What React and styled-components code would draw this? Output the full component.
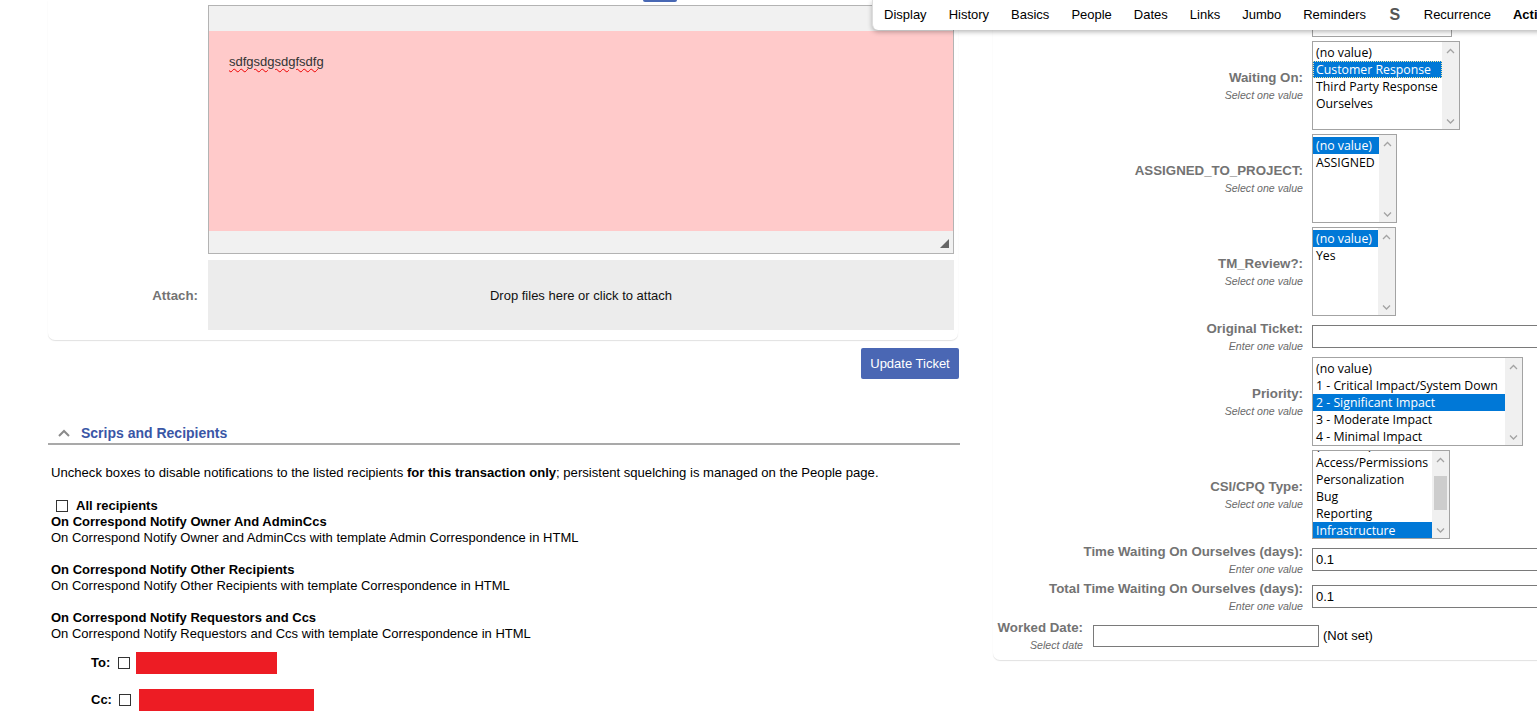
import React from 'react';
import styled, { createGlobalStyle } from 'styled-components';

const GlobalStyle = createGlobalStyle`
  html, body {
    margin: 0;
    padding: 0;
    background: #fff;
    overflow: hidden;
  }
  body {
    font-family: "Liberation Sans", Arial, sans-serif;
    font-size: 13px;
    color: #000;
  }
`;

const Page = styled.div`
  position: relative;
  display: flex;
  align-items: flex-start;
  gap: 33px;
  padding-left: 48px;
  width: max-content;
`;

/* ---------- top tab menu (floats over the page) ---------- */

const TabMenu = styled.nav`
  position: absolute;
  top: 0;
  left: 872px;
  width: 720px;
  height: 30px;
  display: flex;
  align-items: center;
  background: #fff;
  border-left: 1px solid #ddd;
  border-radius: 0 0 0 6px;
  box-shadow: 0 2px 5px rgba(0, 0, 0, 0.28);
  z-index: 5;
`;

const TabItem = styled.span`
  padding: 0 ${(p) => (p.$icon ? 12.5 : 11)}px;
  font-size: ${(p) => (p.$icon ? '16px' : '13px')};
  font-weight: ${(p) => (p.$bold || p.$icon ? 700 : 400)};
  color: ${(p) => (p.$icon ? '#555' : '#000')};
  line-height: 28px;
  white-space: nowrap;
`;

/* ---------- left column ---------- */

const LeftCol = styled.div`
  width: 912px;
  display: flex;
  flex-direction: column;
`;

const EditCard = styled.div`
  width: 910px;
  display: grid;
  grid-template-columns: 150px 746px;
  column-gap: 10px;
  row-gap: 6px;
  padding-bottom: 10px;
  border-radius: 0 0 7px 7px;
  box-shadow: 0 1px 1px #e2e2e2;
`;

const FieldLabel = styled.div`
  align-self: center;
  text-align: right;
  font-weight: 700;
  font-size: 13.3px;
  color: #737373;
`;

const EditorCell = styled.div`
  display: flex;
  flex-direction: column;
`;

const TopTab = styled.div`
  width: 34px;
  height: 2px;
  margin-left: 435px;
  margin-bottom: 3px;
  background: #4868b4;
  border-radius: 0 0 2px 2px;
`;

const Editor = styled.div`
  border: 1px solid #b3b3b3;
  display: flex;
  flex-direction: column;
`;

const EditorBar = styled.div`
  height: ${(p) => p.$h}px;
  background: #f1f1f1;
  display: flex;
  justify-content: flex-end;
  align-items: flex-end;
  padding: 0 4px 5px 0;
  box-sizing: border-box;
`;

const EditorBody = styled.div`
  height: 200px;
  background: #ffcaca;
  padding: 23px 20px 0;
  box-sizing: border-box;
  font-size: 13px;
  line-height: 16px;
  color: #333;
`;

const Misspelled = styled.span`
  text-decoration: underline wavy #e00;
  text-decoration-thickness: 1px;
  text-underline-offset: 2px;
`;

const DropZone = styled.div`
  height: 70px;
  background: #ececec;
  display: flex;
  align-items: center;
  justify-content: center;
  font-size: 13px;
  color: #111;
`;

const ButtonRow = styled.div`
  display: flex;
  justify-content: flex-end;
  margin-top: 8px;
  padding-right: 1px;
`;

const UpdateButton = styled.button`
  width: 98px;
  height: 31px;
  border: none;
  border-radius: 2px;
  background: #4a67b4;
  color: #fff;
  font-family: "Liberation Sans", Arial, sans-serif;
  font-size: 13px;
  padding: 0;
  cursor: pointer;
`;

const SectionHead = styled.div`
  margin-top: 44px;
  height: 20px;
  display: flex;
  align-items: center;
  gap: 11px;
  padding-left: 10px;
  border-bottom: 2px solid #a9a9a9;
`;

const SectionTitle = styled.span`
  font-size: 14px;
  font-weight: 700;
  color: #3a56a6;
`;

const Notice = styled.p`
  margin: 20px 0 0;
  padding-left: 3px;
  font-size: 13.1px;
  line-height: 16px;
`;

const Scrips = styled.div`
  margin-top: 17px;
  padding-left: 3px;
  font-size: 13px;
  line-height: 16px;
`;

const AllRow = styled.label`
  display: flex;
  align-items: center;
  gap: 8px;
  padding-left: 5px;
  font-weight: 700;
`;

const Check = styled.input.attrs({ type: 'checkbox' })`
  appearance: none;
  width: 12px;
  height: 12px;
  margin: 0;
  border: 1px solid #333;
  background: #fff;
  box-sizing: border-box;
  flex-shrink: 0;
`;

const ScripBlock = styled.div`
  & + & {
    margin-top: 16px;
  }
`;

const ScripTitle = styled.div`
  font-weight: 700;
`;

const RecipientRow = styled.div`
  display: flex;
  align-items: center;
  gap: 6px;
  margin-top: ${(p) => p.$top}px;
  padding-left: 40px;
`;

const RecipientLabel = styled.span`
  font-weight: 700;
  width: 21px;
  margin-right: ${(p) => p.$mr}px;
`;

const Redacted = styled.span`
  display: block;
  width: ${(p) => p.$w}px;
  height: 22px;
  margin-left: ${(p) => p.$ml || 0}px;
  background: #ed1c24;
`;

/* ---------- right column ---------- */

const RightCard = styled.div`
  width: 620px;
  padding-bottom: 8px;
  border-radius: 0 0 0 7px;
  box-shadow: 0 1px 1px #e2e2e2;
`;

const FieldGrid = styled.div`
  display: grid;
  grid-template-columns: ${(p) => p.$label}px 1fr;
  column-gap: ${(p) => p.$gap}px;
  row-gap: 4px;
  align-items: center;
  margin-top: ${(p) => p.$top || 0}px;
`;

const LabelCell = styled.div`
  text-align: right;
  padding: 1px 0;
`;

const LabelText = styled.div`
  font-weight: 700;
  font-size: 13.3px;
  line-height: 16px;
  color: #737373;
  white-space: nowrap;
`;

const Hint = styled.div`
  font-style: italic;
  font-size: 10.6px;
  line-height: 12px;
  margin-top: 3px;
  color: #6a6a6a;
`;

const ValueCell = styled.div`
  display: flex;
  align-items: center;
  gap: 4px;
`;

const StubBox = styled.div`
  width: 140px;
  height: 37px;
  border: 1px solid #a3a3a3;
  border-top: none;
  box-sizing: border-box;
`;

const ListBox = styled.div`
  width: ${(p) => p.$w}px;
  height: 89px;
  border: 1px solid #a3a3a3;
  box-sizing: border-box;
  display: flex;
  background: #fff;
  overflow: hidden;
`;

const Options = styled.div`
  flex: 1;
  overflow: hidden;
  padding-top: 2px;
`;

const OptionList = styled.div`
  margin-top: ${(p) => -(p.$scroll || 0)}px;
`;

const Option = styled.div`
  height: 17px;
  line-height: 17px;
  padding-left: 3px;
  font-family: "Open Sans", "Liberation Sans", sans-serif;
  font-size: 12.3px;
  white-space: nowrap;
  box-sizing: border-box;
  background: ${(p) => (p.$selected ? '#0078d7' : 'transparent')};
  color: ${(p) => (p.$selected ? '#fff' : '#000')};
  outline: ${(p) => (p.$focus ? '1px dotted #f3e9a4' : 'none')};
  outline-offset: -1px;
`;

const ScrollBar = styled.div`
  width: 17px;
  background: #f0f0f0;
  display: flex;
  flex-direction: column;
  flex-shrink: 0;
`;

const ScrollArrow = styled.div`
  height: 17px;
  display: flex;
  align-items: center;
  justify-content: center;
`;

const ScrollTrack = styled.div`
  flex: 1;
  padding: 0 2px;
`;

const ScrollThumb = styled.div`
  margin-top: ${(p) => p.$top}px;
  height: ${(p) => p.$h}px;
  background: #cdcdcd;
`;

const TextInput = styled.input`
  width: ${(p) => p.$w}px;
  height: ${(p) => p.$h || 23}px;
  border: 1px solid #7a7a7a;
  box-sizing: border-box;
  padding: 0 3px;
  margin: 0;
  font-family: "Liberation Sans", Arial, sans-serif;
  font-size: 13px;
  color: #000;
  flex-shrink: 0;
`;

const Arrow = ({ down }) => (
  <svg width="9" height="6" viewBox="0 0 9 6">
    <polyline
      points={down ? '1,1.5 4.5,5 8,1.5' : '1,5 4.5,1.5 8,5'}
      fill="none"
      stroke="#a3a3a3"
      strokeWidth="1.3"
    />
  </svg>
);

const SelectList = ({ width, options, selected, focus, scroll, thumb }) => (
  <ListBox $w={width}>
    <Options>
      <OptionList $scroll={scroll}>
        {options.map((o, i) => (
          <Option key={o} $selected={i === selected} $focus={focus && i === selected}>
            {o}
          </Option>
        ))}
      </OptionList>
    </Options>
    <ScrollBar>
      <ScrollArrow>
        <Arrow />
      </ScrollArrow>
      <ScrollTrack>{thumb && <ScrollThumb $top={thumb.top} $h={thumb.h} />}</ScrollTrack>
      <ScrollArrow>
        <Arrow down />
      </ScrollArrow>
    </ScrollBar>
  </ListBox>
);

const Label = ({ text, hint }) => (
  <LabelCell>
    <LabelText>{text}</LabelText>
    <Hint>{hint}</Hint>
  </LabelCell>
);

const tabs = ['Display', 'History', 'Basics', 'People', 'Dates', 'Links', 'Jumbo', 'Reminders'];

const fields = [
  {
    label: 'Waiting On:',
    list: {
      width: 148,
      options: ['(no value)', 'Customer Response', 'Third Party Response', 'Ourselves'],
      selected: 1,
      focus: true,
    },
  },
  { label: 'ASSIGNED_TO_PROJECT:', list: { width: 85, options: ['(no value)', 'ASSIGNED'], selected: 0 } },
  { label: 'TM_Review?:', list: { width: 84, options: ['(no value)', 'Yes'], selected: 0 } },
  { label: 'Original Ticket:', input: '' },
  {
    label: 'Priority:',
    list: {
      width: 211,
      options: [
        '(no value)',
        '1 - Critical Impact/System Down',
        '2 - Significant Impact',
        '3 - Moderate Impact',
        '4 - Minimal Impact',
      ],
      selected: 2,
    },
  },
  {
    label: 'CSI/CPQ Type:',
    list: {
      width: 138,
      options: ['(no value)', 'Access/Permissions', 'Personalization', 'Bug', 'Reporting', 'Infrastructure'],
      selected: 5,
      scroll: 16,
      thumb: { top: 8, h: 34 },
    },
  },
  { label: 'Time Waiting On Ourselves (days):', input: '0.1' },
  { label: 'Total Time Waiting On Ourselves (days):', input: '0.1' },
];

const scrips = [
  {
    title: 'On Correspond Notify Owner And AdminCcs',
    desc: 'On Correspond Notify Owner and AdminCcs with template Admin Correspondence in HTML',
  },
  {
    title: 'On Correspond Notify Other Recipients',
    desc: 'On Correspond Notify Other Recipients with template Correspondence in HTML',
  },
  {
    title: 'On Correspond Notify Requestors and Ccs',
    desc: 'On Correspond Notify Requestors and Ccs with template Correspondence in HTML',
  },
];

export default function App() {
  return (
    <>
      <GlobalStyle />
      <Page>
        <TabMenu>
          {tabs.map((t) => (
            <TabItem key={t}>{t}</TabItem>
          ))}
          <TabItem $icon>S</TabItem>
          <TabItem>Recurrence</TabItem>
          <TabItem $bold>Actions</TabItem>
        </TabMenu>

        <LeftCol>
          <EditCard>
            <div />
            <EditorCell>
              <TopTab />
              <Editor>
                <EditorBar $h={25} />
                <EditorBody>
                  <Misspelled>sdfgsdgsdgfsdfg</Misspelled>
                </EditorBody>
                <EditorBar $h={22}>
                  <svg width="9" height="9" viewBox="0 0 9 9">
                    <polygon points="9,0 9,9 0,9" fill="#666" />
                  </svg>
                </EditorBar>
              </Editor>
            </EditorCell>
            <FieldLabel>Attach:</FieldLabel>
            <DropZone>Drop files here or click to attach</DropZone>
          </EditCard>

          <ButtonRow>
            <UpdateButton>Update Ticket</UpdateButton>
          </ButtonRow>

          <SectionHead>
            <svg width="12" height="8" viewBox="0 0 12 8">
              <polyline points="1,7 6,2 11,7" fill="none" stroke="#8a8a8a" strokeWidth="2" />
            </svg>
            <SectionTitle>Scrips and Recipients</SectionTitle>
          </SectionHead>

          <Notice>
            Uncheck boxes to disable notifications to the listed recipients <b>for this transaction only</b>;
            persistent squelching is managed on the People page.
          </Notice>

          <Scrips>
            <AllRow>
              <Check />
              All recipients
            </AllRow>
            {scrips.map((s) => (
              <ScripBlock key={s.title}>
                <ScripTitle>{s.title}</ScripTitle>
                <div>{s.desc}</div>
              </ScripBlock>
            ))}
            <RecipientRow $top={10}>
              <RecipientLabel $mr={0}>To:</RecipientLabel>
              <Check />
              <Redacted $w={141} />
            </RecipientRow>
            <RecipientRow $top={15}>
              <RecipientLabel $mr={1}>Cc:</RecipientLabel>
              <Check />
              <Redacted $w={175} $ml={2} />
            </RecipientRow>
          </Scrips>
        </LeftCol>

        <RightCard>
          <FieldGrid $label={310} $gap={9}>
            <div />
            <ValueCell>
              <StubBox />
            </ValueCell>
            {fields.map((f) => (
              <React.Fragment key={f.label}>
                <Label text={f.label} hint={f.list ? 'Select one value' : 'Enter one value'} />
                <ValueCell>
                  {f.list ? <SelectList {...f.list} /> : <TextInput $w={280} defaultValue={f.input} />}
                </ValueCell>
              </React.Fragment>
            ))}
          </FieldGrid>
          <FieldGrid $label={90} $gap={10} $top={6}>
            <Label text="Worked Date:" hint="Select date" />
            <ValueCell>
              <TextInput $w={226} $h={22} />
              <span>(Not set)</span>
            </ValueCell>
          </FieldGrid>
        </RightCard>
      </Page>
    </>
  );
}
